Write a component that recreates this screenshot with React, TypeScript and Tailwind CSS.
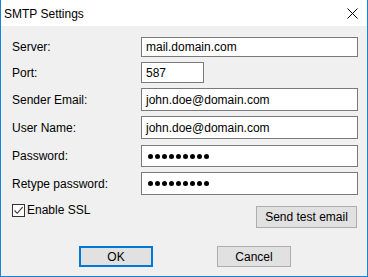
import React from 'react'

const font = { fontFamily: '"Segoe UI", "Liberation Sans", Arial, sans-serif' }

function Dots() {
  return (
    <div className="flex items-center gap-[2px]">
      {Array.from({ length: 9 }).map((_, i) => (
        <span key={i} className="block w-[5px] h-[5px] rounded-full bg-black" />
      ))}
    </div>
  )
}

function Field({
  label,
  top,
  height,
  width = 'w-[217px]',
  value,
  password,
}: {
  label: string
  top: string
  height: string
  width?: string
  value?: string
  password?: boolean
}) {
  return (
    <div className={`flex items-center ${top} ${height}`}>
      <div className="w-[129px] text-[12px] text-black">{label}</div>
      <div
        className={`${width} h-full flex items-center bg-white border border-[#7a7a7a] ${
          password ? 'pl-[6px]' : 'pl-[4px]'
        } text-[12px] text-black`}
      >
        {password ? <Dots /> : value}
      </div>
    </div>
  )
}

export default function App() {
  return (
    <div
      className="w-[368px] h-[277px] flex flex-col bg-[#f0f0f0] border-l border-r border-b border-[#1883d7] overflow-hidden"
      style={font}
    >
      <div className="h-[26px] shrink-0 bg-white flex items-center justify-between pl-[3px] pr-[9px]">
        <span className="text-[12px] text-black pt-[1px]">SMTP Settings</span>
        <svg width="11" height="11" viewBox="0 0 11 11" className="mt-[1px]">
          <path d="M0.5 0.5 L10.5 10.5 M10.5 0.5 L0.5 10.5" stroke="#000" strokeWidth="1" />
        </svg>
      </div>

      <div className="flex flex-col pl-[11px]">
        <Field label="Server:" top="mt-[11px]" height="h-[20px]" value="mail.domain.com" />
        <Field label="Port:" top="mt-[5px]" height="h-[21px]" width="w-[63px]" value="587" />
        <Field label="Sender Email:" top="mt-[5px]" height="h-[23px]" value="john.doe@domain.com" />
        <Field label="User Name:" top="mt-[5px]" height="h-[23px]" value="john.doe@domain.com" />
        <Field label="Password:" top="mt-[6px]" height="h-[22px]" password />
        <Field label="Retype password:" top="mt-[5px]" height="h-[23px]" password />

        <div className="flex items-start justify-between mt-[9px] pr-[10px]">
          <label className="flex items-center gap-[2px] text-[12px] text-black">
            <span className="w-[13px] h-[13px] border border-[#333] bg-white flex items-center justify-center">
              <svg width="11" height="11" viewBox="0 0 11 11">
                <path d="M1.5 5.5 L4.2 8.3 L9.6 2.2" stroke="#333" strokeWidth="1.1" fill="none" />
              </svg>
            </span>
            <span className="leading-[13px]">Enable SSL</span>
          </label>
          <button className="mt-[2px] w-[101px] h-[22px] bg-[#e1e1e1] border border-[#adadad] text-[12px] text-black">
            Send test email
          </button>
        </div>

        <div className="flex mt-[18px] pl-[67px] gap-[64px]">
          <button className="w-[74px] h-[21px] bg-[#e1e1e1] border-2 border-[#0078d7] text-[12px] text-black">
            OK
          </button>
          <button className="w-[74px] h-[21px] bg-[#e1e1e1] border border-[#adadad] text-[12px] text-black">
            Cancel
          </button>
        </div>
      </div>
    </div>
  )
}
